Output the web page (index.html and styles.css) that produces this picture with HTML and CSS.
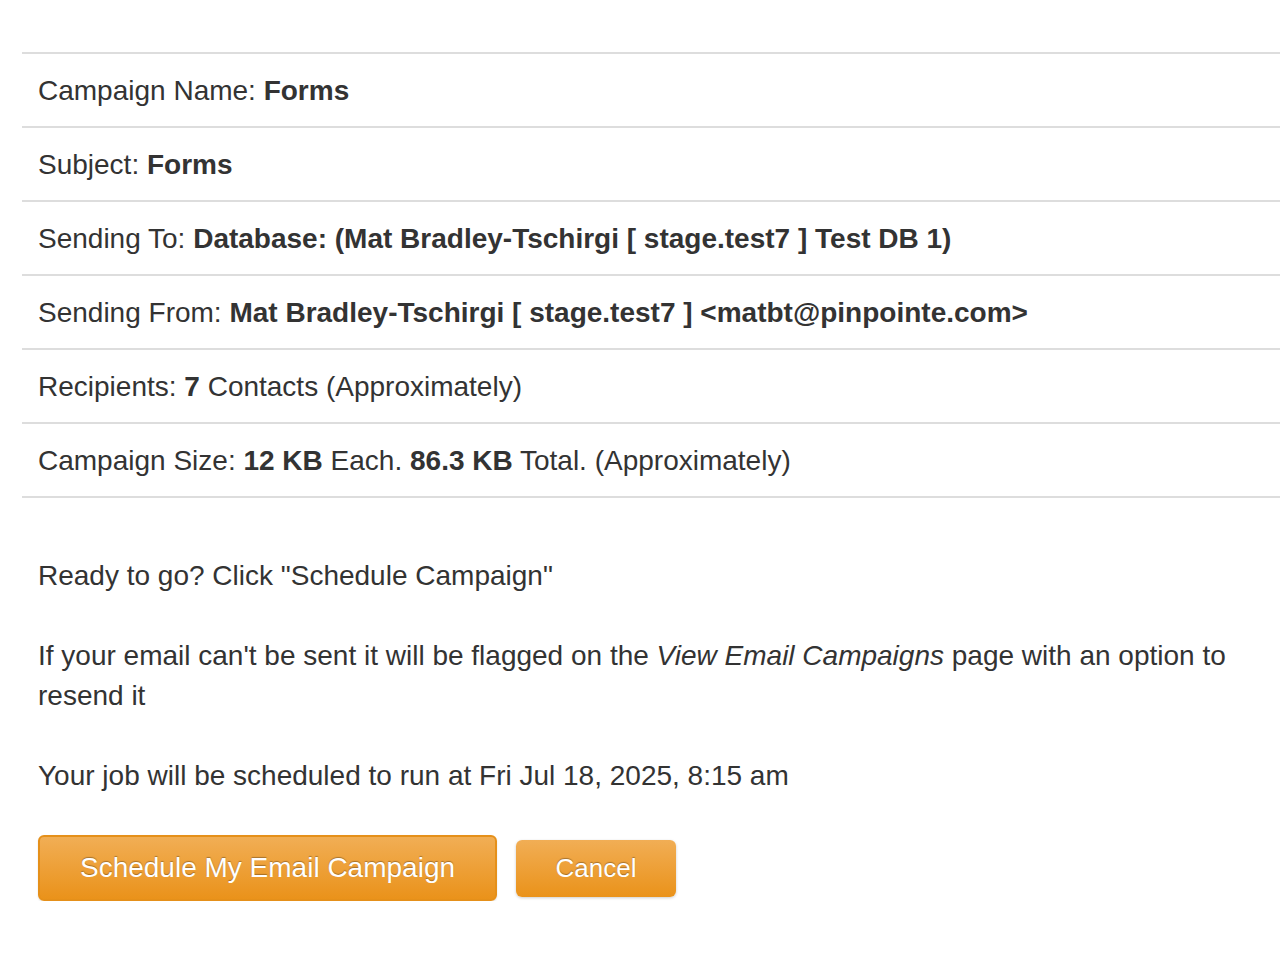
FILE: index.html
```html
<!DOCTYPE html>
<html>
<head>
<meta charset="utf-8">
<link rel="stylesheet" href="styles.css">
</head>
<body>
<div class="page">
  <table class="summary">
    <tr><td>Campaign Name: <b>Forms</b></td></tr>
    <tr><td>Subject: <b>Forms</b></td></tr>
    <tr><td>Sending To: <b>Database: (Mat Bradley-Tschirgi [ stage.test7 ] Test DB 1)</b></td></tr>
    <tr><td>Sending From: <b>Mat Bradley-Tschirgi [ stage.test7 ] &lt;matbt@pinpointe.com&gt;</b></td></tr>
    <tr><td>Recipients: <b>7</b> Contacts (Approximately)</td></tr>
    <tr><td>Campaign Size: <b>12 KB</b> Each. <b>86.3 KB</b> Total. (Approximately)</td></tr>
  </table>
  <div class="notes">
    <p>Ready to go? Click "Schedule Campaign"</p>
    <p>If your email can't be sent it will be flagged on the <i>View Email Campaigns</i> page with an option to resend it</p>
    <p>Your job will be scheduled to run at Fri Jul 18, 2025, 8:15 am</p>
    <div class="actions">
      <button class="btn btn-primary">Schedule My Email Campaign</button>
      <button class="btn btn-cancel">Cancel</button>
    </div>
  </div>
</div>
</body>
</html>
```
FILE: styles.css
```css
html, body {
  margin: 0;
  padding: 0;
  background: #fff;
}
body {
  font-family: "Liberation Sans", Arial, Helvetica, sans-serif;
  font-size: 28px;
  line-height: 40px;
  color: #333;
}
.page {
  padding: 52px 0 0 22px;
}
.summary {
  width: calc(100% + 40px);
  border-collapse: collapse;
}
.summary td {
  border-top: 2px solid #ddd;
  border-bottom: 2px solid #ddd;
  padding: 17px 16px 15px 16px;
  height: 40px;
}
.summary b {
  font-weight: bold;
}
.notes {
  padding: 57px 16px 0 16px;
}
.notes p {
  margin: 0 0 39px 0;
  padding-top: 1px;
}
.actions {
  display: flex;
  align-items: center;
  gap: 19px;
}
.btn {
  font-family: "Liberation Sans", Arial, Helvetica, sans-serif;
  color: #fff;
  text-shadow: 0 -1px 1px rgba(0,0,0,0.3);
  background: linear-gradient(to bottom, #f1ae55, #ea921a);
  border-radius: 6px;
  cursor: pointer;
  padding: 0;
}
.btn-primary {
  width: 459px;
  height: 66px;
  font-size: 28px;
  border: 2px solid #e5901a;
  box-shadow: 0 1px 2px rgba(0,0,0,0.12);
}
.btn-cancel {
  width: 160px;
  height: 57px;
  font-size: 26px;
  border: 0;
  box-shadow: 0 1px 3px rgba(0,0,0,0.2);
}
```
